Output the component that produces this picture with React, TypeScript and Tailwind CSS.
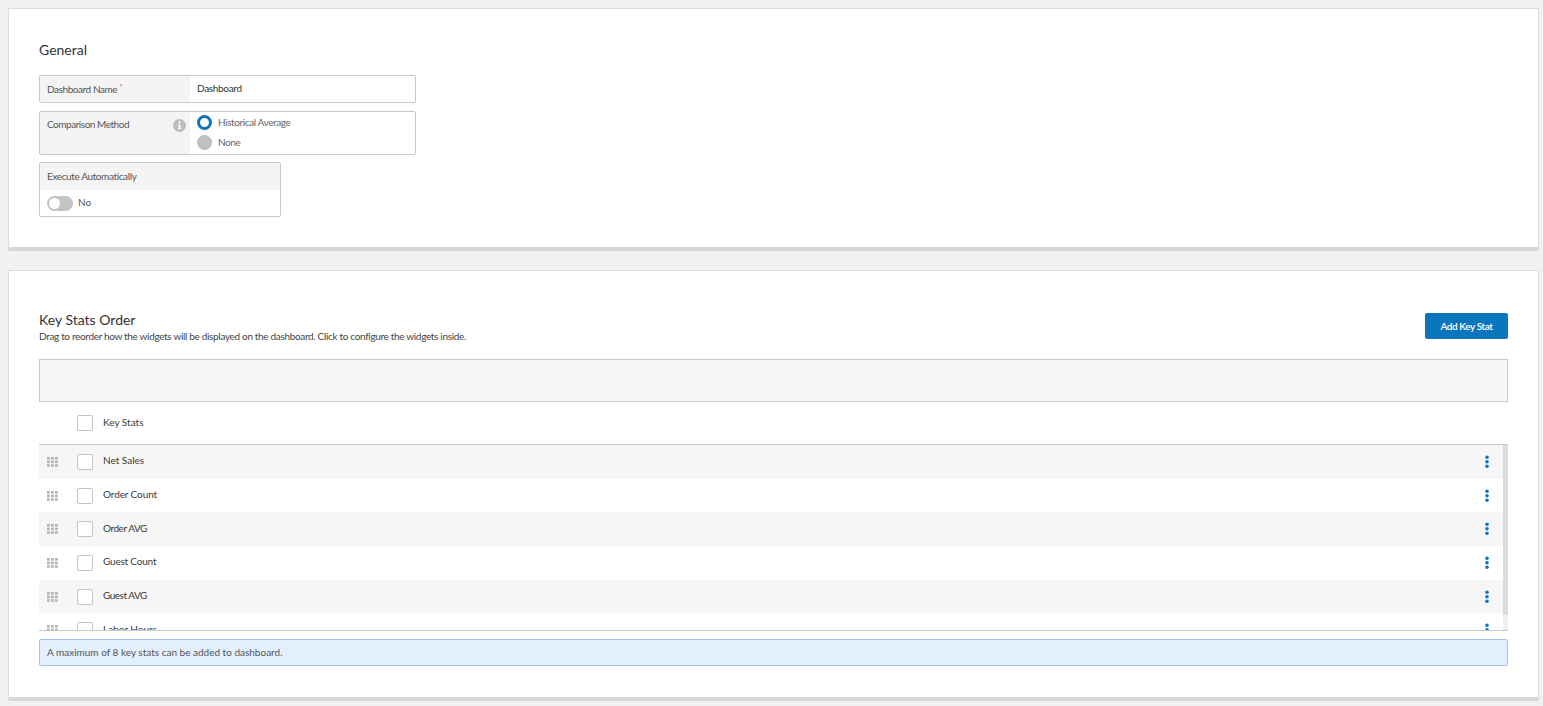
const stats = [
  { name: "Net Sales", fit: "" },
  { name: "Order Count", fit: "tracking-[-0.1px]" },
  { name: "Order AVG", fit: "tracking-[-0.45px]" },
  { name: "Guest Count", fit: "tracking-[-0.2px]" },
  { name: "Guest AVG", fit: "tracking-[-0.5px]" },
  { name: "Labor Hours", fit: "" },
];

function Checkbox() {
  return <span className="box-content block h-[14px] w-[14px] shrink-0 rounded-[2px] border border-[#c4c4c4] bg-white" />;
}

function DragHandle() {
  return (
    <svg width="11" height="10" viewBox="0 0 11 10" fill="#b4b4b4">
      {[0, 4, 8].map((x) =>
        [0, 3.6, 7.2].map((y) => <rect key={`${x}-${y}`} x={x} y={y} width="2.8" height="2.6" />),
      )}
    </svg>
  );
}

function Kebab() {
  return (
    <svg width="4" height="14" viewBox="0 0 4 14" fill="#0b76bd">
      <circle cx="2" cy="2.2" r="1.8" />
      <circle cx="2" cy="6.7" r="1.8" />
      <circle cx="2" cy="11.2" r="1.8" />
    </svg>
  );
}

function InfoDot() {
  return (
    <svg width="13" height="13" viewBox="0 0 13 13">
      <circle cx="6.5" cy="6.5" r="6.5" fill="#bdbdbd" />
      <rect x="5.6" y="2.4" width="1.9" height="1.9" fill="#fff" />
      <path d="M4.9 5.4h2.6v3.7h.8v1H4.9v-1h.8V6.4h-.8z" fill="#fff" />
    </svg>
  );
}

function StatRow({ name, fit, odd }: { name: string; fit: string; odd: boolean }) {
  return (
    <div className={`flex h-[33.7px] shrink-0 items-center pr-[14px] pl-2 ${odd ? "bg-[#f6f6f6]" : "bg-white"}`}>
      <div className="w-[30px]">
        <DragHandle />
      </div>
      <Checkbox />
      <span className={`ml-[10px] pb-[2px] text-[10px] text-[#3a3a3a] ${fit}`}>{name}</span>
      <div className="ml-auto">
        <Kebab />
      </div>
    </div>
  );
}

export default function App() {
  return (
    <div className="flex min-h-[706px] flex-col gap-[19px] bg-[#f1f1f1] pt-2 pr-1 pl-2 font-['Lato','Noto_Sans',sans-serif] text-[#444]">
      <section className="h-[243px] border-x border-t border-x-[#dcdcdc] border-t-[#dcdcdc] border-b-[4px] border-b-[#d8d8d8] bg-white px-[30px] pt-[32px]">
        <h2 className="text-[14px] leading-[18px] text-[#333]">General</h2>
        <div className="mt-[16px] flex h-[28px] w-[377px] overflow-hidden rounded-[2px] border border-[#c8c8c8]">
          <div className="flex w-[150px] items-center bg-[#f4f4f4] pl-[7px] text-[10px] tracking-[-0.43px] text-[#555]">
            Dashboard Name <span className="ml-[2px] -translate-y-[2px] text-[8px] text-[#e05a5a]">*</span>
          </div>
          <div className="flex flex-1 items-center pb-[2px] pl-[7px] text-[10px] tracking-[-0.33px] text-[#333]">Dashboard</div>
        </div>
        <div className="mt-2 flex h-[44px] w-[377px] overflow-hidden rounded-[2px] border border-[#c8c8c8]">
          <div className="flex w-[150px] items-start justify-between bg-[#f4f4f4] pt-[5px] pr-[4px] pl-[7px] text-[10px] leading-[14px] tracking-[-0.47px] text-[#555]">
            Comparison Method
            <span className="mt-[2px]">
              <InfoDot />
            </span>
          </div>
          <div className="flex flex-1 flex-col gap-[5px] pt-[3px] pl-[7px] text-[10px] tracking-[-0.39px] text-[#666]">
            <label className="flex h-[15px] items-center gap-[6px]">
              <span className="h-[15px] w-[15px] rounded-full border-[3px] border-[#0b76bd] bg-white" />
              Historical Average
            </label>
            <label className="flex h-[15px] items-center gap-[6px]">
              <span className="h-[15px] w-[15px] rounded-full bg-[#c0c0c0]" />
              None
            </label>
          </div>
        </div>
        <div className="mt-[7px] h-[55px] w-[242px] overflow-hidden rounded-[2px] border border-[#c8c8c8]">
          <div className="flex h-[27px] items-center bg-[#f4f4f4] pl-[7px] text-[10px] tracking-[-0.38px] text-[#555]">Execute Automatically</div>
          <div className="flex h-[26px] items-center gap-[5px] pl-[7px] text-[10px] text-[#555]">
            <span className="flex h-[15px] w-[26px] items-center rounded-full bg-[#c4c4c4] pl-[2px]">
              <span className="h-[11px] w-[11px] rounded-full bg-white" />
            </span>
            <span className="pb-px">No</span>
          </div>
        </div>
      </section>

      <section className="h-[431px] border-x border-t border-x-[#dcdcdc] border-t-[#dcdcdc] border-b-[4px] border-b-[#d8d8d8] bg-white px-[30px] pt-[40px]">
        <div className="flex items-start justify-between">
          <div>
            <h2 className="text-[14px] leading-[17px] font-normal text-[#333]">Key Stats Order</h2>
            <p className="mt-px text-[10px] leading-[14px] tracking-[-0.33px] text-[#444]">
              Drag to reorder how the widgets will be displayed on the dashboard. Click to configure the widgets inside.
            </p>
          </div>
          <button className="mt-[2px] h-[26px] w-[83px] rounded-[2px] bg-[#0b76bd] text-[10px] font-semibold tracking-[-0.4px] text-white">Add Key Stat</button>
        </div>
        <div className="mt-[16px] h-[43px] border border-[#c8c8c8] bg-[#f6f6f6]" />
        <div className="flex h-[43px] items-center border-b border-[#c8c8c8] pl-[38px]">
          <Checkbox />
          <span className="ml-[10px] pb-[2px] text-[10px] text-[#3a3a3a]">Key Stats</span>
        </div>
        <div className="flex h-[186px] border-b border-[#c8c8c8]">
          <div className="flex min-w-0 flex-1 flex-col overflow-hidden">
            {stats.map((s, i) => (
              <StatRow key={s.name} name={s.name} fit={s.fit} odd={i % 2 === 0} />
            ))}
          </div>
          <div className="w-[5px] bg-[#f0f0f0]">
            <div className="h-[170px] bg-[#dcdcdc]" />
          </div>
        </div>
        <div className="mt-2 flex h-[27px] items-center rounded-[2px] border border-[#9cc6f0] bg-[#e3effc] pl-[7px] text-[10px] text-[#555]">
          A maximum of 8 key stats can be added to dashboard.
        </div>
      </section>
    </div>
  );
}
